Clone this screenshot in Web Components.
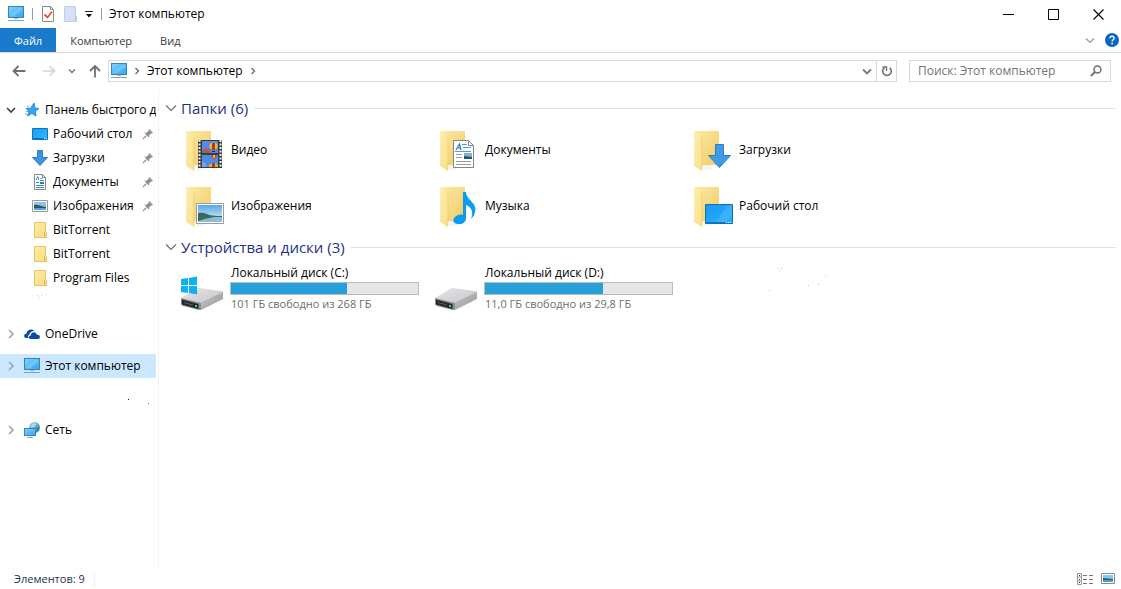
<!DOCTYPE html>
<html lang="ru">
<head>
<meta charset="utf-8">
<title>Этот компьютер</title>
<style>
  html, body { margin: 0; height: 100%; background: #fff; }
  body { font: 12px/16px "Open Sans", "Noto Sans", sans-serif; color: #000; }
</style>
</head>
<body>
<explorer-window>
  <title-bar slot="top">Этот компьютер</title-bar>
  <ribbon-tabs slot="top"></ribbon-tabs>
  <address-bar slot="top" location="Этот компьютер"></address-bar>

  <nav-tree slot="side">
    <nav-item icon="star" arrow="open">Панель быстрого до</nav-item>
    <nav-item icon="desktop" child pinned>Рабочий стол</nav-item>
    <nav-item icon="download" child pinned>Загрузки</nav-item>
    <nav-item icon="document" child pinned>Документы</nav-item>
    <nav-item icon="picture" child pinned>Изображения</nav-item>
    <nav-item icon="folder" child>BitTorrent</nav-item>
    <nav-item icon="folder" child>BitTorrent</nav-item>
    <nav-item icon="folder" child>Program Files</nav-item>
    <nav-gap icon="crumbs"></nav-gap>
    <nav-item icon="cloud" arrow="closed">OneDrive</nav-item>
    <nav-gap short></nav-gap>
    <nav-item icon="pc" arrow="closed" selected>Этот компьютер</nav-item>
    <nav-gap icon="specks"></nav-gap>
    <nav-gap short></nav-gap>
    <nav-item icon="network" arrow="closed">Сеть</nav-item>
  </nav-tree>

  <item-group label="Папки (6)">
    <folder-tile icon="f-video">Видео</folder-tile>
    <folder-tile icon="f-doc">Документы</folder-tile>
    <folder-tile icon="f-down">Загрузки</folder-tile>
    <folder-tile icon="f-pic">Изображения</folder-tile>
    <folder-tile icon="f-music">Музыка</folder-tile>
    <folder-tile icon="f-desk">Рабочий стол</folder-tile>
  </item-group>
  <item-group label="Устройства и диски (3)">
    <drive-tile icon="drive-win" used="62" note="101 ГБ свободно из 268 ГБ">Локальный диск (C:)</drive-tile>
    <drive-tile icon="drive" used="63" note="11,0 ГБ свободно из 29,8 ГБ">Локальный диск (D:)</drive-tile>
    <ui-icon name="dust"></ui-icon>
  </item-group>

  <status-bar slot="bottom">Элементов: 9</status-bar>
</explorer-window>

<script>
const svg = (w, h, body) => `<svg width="${w}" height="${h}" viewBox="0 0 ${w} ${h}" fill="none" aria-hidden="true">${body}</svg>`;
const grad = (id, a, b, dir = 'x2="1" y2="1"') => `<linearGradient id="${id}" ${dir}><stop stop-color="${a}"/><stop offset="1" stop-color="${b}"/></linearGradient>`;

const bigFolder = `<defs>${grad('fb', '#fdeaa6', '#f2cb63')}${grad('ff', '#fdeeb4', '#fadf86')}</defs>
  <path d="M7 5h24v34H14z" fill="url(#fb)"/><path d="M6 5l8 6v34l-8-5z" fill="url(#ff)"/><path d="M14 11v34" stroke="#e9c768" stroke-width=".6"/>
  <path d="M15 39h8v5h-7z" fill="#f4f4f4"/>`;
const driveBody = `<defs>${grad('dt', '#e4e4e6', '#c6c7ca')}${grad('ds', '#c8c8ca', '#96979a')}</defs>
  <path d="M1 35l15-9q1-1 3-1l22 3q3 0 2 2L21 41z" fill="url(#dt)"/>
  <path d="M20 40l23-11v7L21 47h-1z" fill="url(#ds)"/>
  <path d="M1 35l20 5v6q0 1-2 1L3 43q-2-1-2-2z" fill="#8a8c8f"/>
  <path d="M2 36.500l16.500 4.500v5L2 41.500z" fill="#252729"/><path d="M4 39.500l9 2.500" stroke="#5b5f61"/><path d="M15 42h2v2h-2z" fill="#3fd25c"/>`;
const monitor = (x, y, w, h) => `<rect x="${x + .5}" y="${y + .5}" width="${w - 1}" height="${h - 1}" fill="url(#mo)" stroke="#3c83b4"/>`;
const moGrad = `<defs>${grad('mo', '#7fd3ff', '#2fa6f2')}</defs>`;

const ICONS = {
  pc: svg(16, 16, moGrad + monitor(0, 0, 16, 12) + '<path d="M0 14.500h16" stroke="#8aa0ae"/><path d="M6 12h4v1H6z" fill="#9bb8cc"/><path d="M2 10l9-8h3v2l-8 6z" fill="#fff" opacity=".16"/>'),
  check: svg(14, 16, '<path d="M1.500 .5h8l3 3v12h-11z" fill="#fff" stroke="#8a8a8a"/><path d="M9.500 .5v3h3" stroke="#8a8a8a"/><path d="M3.500 8.500l3 3 4.500-6" stroke="#e0542c" stroke-width="1.800"/>'),
  ghost: svg(14, 16, '<path d="M1.500.5h11v9l1 1v5h-12z" fill="#d5e2f5" stroke="#c3d0e2"/><path d="M12.500 9v6" stroke="#b9c6da"/>'),
  more: svg(8, 8, '<path d="M0 1.500h8" stroke="#222"/><path d="M1 4h6L4 7.500z" fill="#111"/>'),
  min: svg(11, 11, '<path d="M0 5.500h11" stroke="#000"/>'),
  max: svg(11, 11, '<path d="M.5.5h10v10H.5z" stroke="#000"/>'),
  close: svg(11, 11, '<path d="M.5.5l10 10M10.500.5l-10 10" stroke="#000" stroke-width="1.100"/>'),
  help: svg(14, 14, '<circle cx="7" cy="7" r="7" fill="#0a66c4"/><path d="M4.900 5.300c.1-2.900 4.400-2.700 4.200-.1-.1 1.500-1.900 1.500-2 3.300" stroke="#fff" stroke-width="1.400"/><circle cx="7.100" cy="10.500" r=".9" fill="#fff"/>'),
  back: svg(14, 12, '<path d="M13.500 6H2M6.500 1L1.500 6l5 5" stroke="#707070" stroke-width="1.800"/>'),
  fwd: svg(14, 12, '<path d="M.5 6H12M7.500 1l5 5-5 5" stroke="#d4d4d4" stroke-width="1.600"/>'),
  up: svg(12, 14, '<path d="M6 13.500V2M1 7l5-5 5 5" stroke="#707070" stroke-width="1.800"/>'),
  tiny: svg(8, 6, '<path d="M1 1.500l3 3 3-3" stroke="#777" stroke-width="1.400"/>'),
  drop: svg(10, 7, '<path d="M1 1.500l4 4 4-4" stroke="#777" stroke-width="1.900"/>'),
  thin: svg(10, 7, '<path d="M1 1.500l4 4 4-4" stroke="#999" stroke-width="1.200"/>'),
  group: svg(12, 8, '<path d="M1 1.500l5 5 5-5" stroke="#6f6f6f" stroke-width="1.200"/>'),
  open: svg(10, 8, '<path d="M1 2l4 4 4-4" stroke="#444" stroke-width="1.700"/>'),
  closed: svg(10, 10, '<path d="M3 1l4 4-4 4" stroke="#a3a3a3" stroke-width="1.600"/>'),
  crumb: svg(6, 8, '<path d="M1.500 1l3 3-3 3" stroke="#777" stroke-width="1.500"/>'),
  refresh: svg(12, 12, '<path d="M3.300 2.800a4.300 4.300 0 1 0 5.400 0" stroke="#707070" stroke-width="1.600"/><path d="M1.500 2h4v4" stroke="#707070" stroke-width="1.400"/>'),
  search: svg(12, 12, '<circle cx="7.500" cy="4.500" r="3.500" stroke="#707070" stroke-width="1.500"/><path d="M5 7L.8 11.200" stroke="#707070" stroke-width="1.900"/>'),
  star: svg(16, 16, '<path d="M10 1l1 5 4 .5-3.500 3L12 14l-4-2.500L3.500 14 5 9.500 2 6.500l4.500-.3z" fill="#35a4ee" stroke="#1d82cf" stroke-width=".8"/><path d="M2 9.500h3M1 12h2.500M3 4.500l2 .5" stroke="#4fb0ef"/>'),
  desktop: svg(16, 16, `<defs>${grad('dk', '#16a0f8', '#36b4ff')}</defs><path d="M.5 2.500h15v11H.5z" fill="url(#dk)" stroke="#1272b8"/><path d="M1 12.500h11" stroke="#0a71c4"/><path d="M12 12.500h3" stroke="#c5e8ff" stroke-dasharray="1 1"/>`),
  download: svg(16, 16, '<path d="M5.500.5h5v7h5L8 15.500.5 7.500h5z" fill="#3d94e0" stroke="#2a79c1"/>'),
  document: svg(16, 16, '<path d="M2.500.5h8l3 3v12h-11z" fill="#fff" stroke="#888"/><path d="M10.500.5v3h3" stroke="#888"/><path d="M4 6l1.800-3.500L7 6M4 8.500h3M4 11.500h8M4 13.500h8M8 6.500h4M8.500 4.500h2" stroke="#3a8fc9"/><path d="M8 8h4v2H8z" fill="#397f9c"/>'),
  picture: svg(16, 16, '<path d="M.5 2.500h15v11H.5z" fill="#fff" stroke="#9a9a9a"/><path d="M2 4h12v8H2z" fill="#8cc4f2"/><path d="M2 7c4-1 7 2 12 2v1H2z" fill="#27595c"/><path d="M2 10h12v2H2z" fill="#5d9fd4"/>'),
  folder: svg(16, 16, `<defs>${grad('fo', '#ffeeab', '#fadb7b')}</defs><path d="M2.500.5h11v9l1 1v5h-12z" fill="url(#fo)" stroke="#e8c469"/><path d="M12.500 15v-4.500l1-1" stroke="#dfb651"/>`),
  cloud: svg(16, 16, '<path d="M1.500 12C-.8 10.500.2 7.500 2.500 7.500 3 3.500 8 2 10.500 5 7 5 5.500 7 5.500 8.500 3.500 9.500 4 12 4.500 12z" fill="#0c4da2"/><path d="M6.500 13c-2.500-.3-2-3.500.3-3.500C7 6 11.500 5 12.800 8.500c3.700-.2 4.200 4.200 1.200 4.500z" fill="#0c4da2"/>'),
  network: svg(16, 16, `<defs>${grad('gl', '#a4d8ee', '#2c7fae')}</defs><circle cx="10.500" cy="5.500" r="5.500" fill="url(#gl)"/><path d="M8 2l3-1 1 2-2 2-3 0z" fill="#d6eecb" opacity=".7"/><path d="M13 5h2v3l-2 1z" fill="#2b7f77" opacity=".8"/>` + moGrad + monitor(0, 6, 12, 8) + '<path d="M3 15.500h6" stroke="#7fa8c3"/>'),
  pin: svg(12, 12, '<path d="M7 .8L11.200 5l-2 .5-2 2 0 2.300L2.200 4.800l2.300 0 2-2z" fill="#8b949b"/><path d="M4.600 7.400L1 11" stroke="#8b949b" stroke-width="1.300"/>'),
  crumbs: svg(16, 8, '<path d="M3 5h1v1H3zM8 5h1v1H8zM12 4h1v1h-1zM5 7h1v1H5z" fill="#ecd48c"/>'),
  specks: svg(24, 8, '<path d="M0 3h1v1H0z" fill="#222"/><path d="M20 7h1v1h-1z" fill="#777"/>'),
  dust: svg(120, 48, '<path d="M89 7h1v1h-1zM91 9h1v1h-1zM120 24h1v1h-1zM81 29h1v1h-1zM137 15h1v1h-1z" fill="#ccc"/><path d="M93 7h1v1h-1zM130 23h1v1h-1z" fill="#bbb"/>'),
  details: svg(16, 12, '<path d="M.5.5h4v11h-4zM.5 4h4M.5 8h4" stroke="#999"/><path d="M2 2h1v1H2zM2 6h1v1H2zM2 9h1v1H2z" fill="#333"/><path d="M6 2.500h4M12 2.500h4M6 6.500h4M12 6.500h4M6 10.500h4M12 10.500h4" stroke="#777"/>'),
  thumbs: svg(14, 12, '<path d="M.5.5h13v10H.5z" fill="#fff" stroke="#8b8b8b"/><path d="M2 2h10v7H2z" fill="#8cc4f2"/><path d="M2 5c4 0 6 1 10 1v1H2z" fill="#285e72"/><path d="M2 7h10v2H2z" fill="#569bd0"/>'),
  'f-video': svg(48, 48, bigFolder + `<path d="M18 14h24v28H18z" fill="#3c3c3c"/><path d="M19.500 14v28M40.500 14v28" stroke="#eee" stroke-width="2" stroke-dasharray="2 1.500"/>
    <path d="M22 15h16v12H22zM22 29h16v12H22z" fill="#4d8de8"/><path d="M22 24l5-2 4 3v2h-9z" fill="#cf4c5f"/><path d="M22 27v-2l3 1 4-1v2z" fill="#4d8c36"/>
    <ellipse cx="33.500" cy="20" rx="4" ry="3.500" fill="#f1bb24"/><path d="M32 17h3v7h-3z" fill="#c22f25"/><path d="M32 25h3v1h-3z" fill="#222"/>
    <path d="M31 29h6l-2 4h-2z" fill="#d0372f"/><path d="M33 29h2v3h-2z" fill="#f1bb24"/><path d="M29 41q0-4 4.500-4t4.500 4z" fill="#e7b62c"/><path d="M32 37h3v4h-3z" fill="#c22f25"/><path d="M22 35l4 3v3h-4z" fill="#6faaf0"/>`),
  'f-doc': svg(48, 48, bigFolder + `<path d="M19.500 14.500h15l5 5v22h-20z" fill="#fff" stroke="#858585"/><path d="M34.500 14.500v5h5" stroke="#858585"/>
    <path d="M22 24l3.500-6 1.500 6M23.500 22h3" stroke="#2481bd" stroke-width="1.200"/><path d="M28 18.500h5M29 21.500h8M21 25.500h16" stroke="#4ba2d5"/><path d="M22 28.500h6M22 31.500h6M22 35.500h15M22 38.500h15" stroke="#999"/><path d="M30 27h8v6h-8z" fill="#77b5dc"/><path d="M30 30l8 1v2h-8z" fill="#275463"/>`),
  'f-down': svg(48, 48, bigFolder + '<path d="M27.500 18.500h8v11h7L31.500 41.500 20.500 29.500h7z" fill="#419ae4" stroke="#2d7bc4"/>'),
  'f-pic': svg(48, 48, bigFolder + `<defs>${grad('sk', '#5aa7e8', '#e2f3fc', 'x2="0" y2="1"')}</defs><path d="M16.500 21.500h27v20h-27z" fill="#fff" stroke="#9b9b9b"/><path d="M18 23h24v17H18z" fill="url(#sk)"/>
    <path d="M18 31q5-1 9 1t15 2v1H18z" fill="#386b58"/><path d="M18 35h24v5H18z" fill="#8bbcda"/><path d="M18 35h16l-9 2-7 2z" fill="#3b6b68"/>`),
  'f-music': svg(48, 48, bigFolder + '<path d="M29 10h3c0 8 12 11 9 20-.5 3-2 5-4 7 3-8 0-12-5-14v13c0 4-4 7-8 6-5 0-6-4-3-7 2-2 5-3 8-2z" fill="#0a9bf2"/>'),
  'f-desk': svg(48, 48, bigFolder + `<defs>${grad('de', '#1599f2', '#2db1ff')}</defs><path d="M17.500 22.500h27v19h-27z" fill="url(#de)" stroke="#176fa9"/><path d="M28 40l12-17h4v9l-6 8z" fill="#fff" opacity=".1"/><path d="M18 40.500h20" stroke="#0a78cd"/><path d="M38 40.500h6" stroke="#d9f1ff" stroke-dasharray="1 1"/>`),
  drive: svg(48, 48, driveBody),
  'drive-win': svg(48, 48, driveBody + '<path d="M1 16l7-1v7H1zM9 15l8-1.500V22H9zM1 23h7v7l-7-1zM9 23h8v8.500L9 30z" fill="#0cb2f0"/>'),
};

const define = (name, css, html) => customElements.define(name, class extends HTMLElement {
  constructor() {
    super();
    this.attachShadow({ mode: 'open' });
  }
  connectedCallback() {
    const tpl = document.createElement('template');
    tpl.innerHTML = `<style>*{box-sizing:border-box}button{font:inherit;color:inherit;background:none;border:0;padding:0;margin:0}${css}</style>` +
      (typeof html === 'function' ? html(this) : html);
    this.shadowRoot.replaceChildren(tpl.content.cloneNode(true));
  }
});
const icon = n => `<ui-icon name="${n}"></ui-icon>`;

define('ui-icon', ':host{display:inline-flex;flex:none}svg{display:block;overflow:visible}', el => ICONS[el.getAttribute('name')] || '');

define('title-bar', `
  :host{display:flex;align-items:center;height:28px;padding-left:8px}
  i{width:1px;height:12px;background:#9a9a9a}
  button{display:flex;align-items:center;justify-content:center}
  .quick{display:flex;align-items:center;gap:8px}
  .name{flex:1;padding-left:7px}
  .win button{width:45px;height:26px}
  .win{display:flex}`,
  `<div class="quick">${icon('pc')}<i></i><button aria-label="Свойства">${icon('check')}</button><button aria-label="Новая папка">${icon('ghost')}</button><button aria-label="Настройка панели">${icon('more')}</button><i></i></div>
   <span class="name"><slot></slot></span>
   <div class="win"><button aria-label="Свернуть">${icon('min')}</button><button aria-label="Развернуть">${icon('max')}</button><button aria-label="Закрыть">${icon('close')}</button></div>`);

define('ribbon-tabs', `
  :host{display:flex;align-items:center;height:24px;border-bottom:1px solid #dadbdc;color:#3c3c3c;font-size:11px}
  button{height:24px;padding:2px 14px 0}
  .file{background:#1979ca;color:#fff}
  .end{margin-left:auto;display:flex;align-items:center;gap:10px;padding-right:2px}
  .end button{padding:0;display:flex;align-items:center}`,
  `<button class="file">Файл</button><button>Компьютер</button><button>Вид</button>
   <div class="end"><button aria-label="Развернуть ленту">${icon('thin')}</button><button aria-label="Справка">${icon('help')}</button></div>`);

define('address-bar', `
  :host{display:flex;align-items:center;height:36px;padding:0 10px 0 12px}
  button{display:flex;align-items:center;justify-content:center}
  .arrows{display:flex;align-items:center;width:96px}
  .arrows button+button{margin-left:16px}
  .arrows button:nth-child(3){margin-left:12px}
  .arrows button:nth-child(4){margin-left:13px}
  .path{flex:1;display:flex;align-items:center;height:22px;border:1px solid #d9d9d9;padding-left:2px;gap:7px}
  .path .end{margin-left:auto}
  .reload{width:20px;height:20px;border-left:1px solid #d9d9d9;margin-left:-3px}
  .find{display:flex;align-items:center;width:202px;height:22px;margin-left:12px;border:1px solid #d9d9d9;padding:0 8px}
  input{flex:1;min-width:0;border:0;padding:0;font:inherit;outline:0;background:none}
  input::placeholder{color:#757575;opacity:1}`,
  el => `<div class="arrows"><button aria-label="Назад">${icon('back')}</button><button aria-label="Вперед">${icon('fwd')}</button><button aria-label="Последние">${icon('tiny')}</button><button aria-label="Вверх">${icon('up')}</button></div>
   <div class="path">${icon('pc')}${icon('crumb')}<button>${el.getAttribute('location')}</button>${icon('crumb')}<button class="end" aria-label="История">${icon('drop')}</button><button class="reload" aria-label="Обновить">${icon('refresh')}</button></div>
   <div class="find"><input type="search" aria-label="Поиск" placeholder="Поиск: ${el.getAttribute('location')}"><button aria-label="Найти">${icon('search')}</button></div>`);

define('nav-tree', ':host{display:flex;flex-direction:column;padding:9px 2px 0 0}', '<slot></slot>');

define('nav-gap', ':host{display:flex;align-items:flex-start;height:32px}:host([short]){height:8px}:host([icon=crumbs]){padding-left:34px}:host([icon=specks]){padding:18px 0 0 128px;box-sizing:border-box}',
  el => el.hasAttribute('icon') ? icon(el.getAttribute('icon')) : '');

define('nav-item', `
  :host{display:block}
  a{display:flex;align-items:center;height:24px;padding-left:6px;color:inherit;text-decoration:none}
  .arrow{width:18px;display:flex}
  :host([child]) a{padding-left:32px}
  :host([selected]) a{background:#cce8ff}
  span{flex:1;min-width:0;padding-left:5px;white-space:nowrap;overflow:hidden}
  .pin{margin-right:2px}`,
  el => `<a href="#">${el.hasAttribute('child') ? '' : `<div class="arrow">${icon(el.getAttribute('arrow'))}</div>`}${icon(el.getAttribute('icon'))}<span><slot></slot></span>${el.hasAttribute('pinned') ? '<ui-icon class="pin" name="pin"></ui-icon>' : ''}</a>`);

define('item-group', `
  :host{display:block}
  header{display:flex;align-items:center;height:27px;padding-bottom:1px}
  button{display:flex;width:16px}
  h2{margin:0;padding-bottom:1px;font-size:15px;line-height:24px;font-weight:400;color:#1e3287}
  hr{flex:1;height:1px;border:0;margin:0 0 0 6px;background:#e2e2e2}
  .grid{display:grid;grid-template-columns:repeat(auto-fill,254px);grid-auto-rows:56px;padding-left:15px}`,
  el => `<header><button aria-label="Свернуть группу">${icon('group')}</button><h2>${el.getAttribute('label')}</h2><hr></header><div class="grid"><slot></slot></div>`);

define('folder-tile', ':host{display:flex;align-items:center;gap:3px}', el => `${icon(el.getAttribute('icon'))}<span><slot></slot></span>`);

define('drive-tile', `
  :host{display:flex;gap:2px;padding-top:2px}
  label{display:block;padding-left:1px}
  .info{padding-top:2px}
  progress{display:block;appearance:none;-webkit-appearance:none;width:189px;height:13px;margin:1px 0;border:1px solid #bcbcbc;background:#e6e6e6}
  progress::-webkit-progress-bar{background:#e6e6e6}
  progress::-webkit-progress-value{background:#26a0da}
  small{display:block;font-size:11px;padding-left:1px;color:#6d6d6d}`,
  el => `${icon(el.getAttribute('icon'))}<div class="info"><label for="p"><slot></slot></label><progress id="p" max="100" value="${el.getAttribute('used')}"></progress><small>${el.getAttribute('note')}</small></div>`);

define('status-bar', `
  :host{display:flex;align-items:center;height:21px;padding:0 6px 0 14px;color:#26364d;font-size:11px}
  span{padding-right:9px;border-right:1px solid #f2f2f2}
  .modes{margin-left:auto;display:flex;gap:8px}
  button{display:flex}`,
  `<span><slot></slot></span><div class="modes"><button aria-label="Таблица">${icon('details')}</button><button aria-label="Крупные значки">${icon('thumbs')}</button></div>`);

define('explorer-window', `
  :host{display:flex;flex-direction:column;min-height:100vh}
  .body{flex:1;display:flex}
  aside{width:159px;flex:none;border-right:1px solid #f3f3f3}
  main{flex:1;min-width:0;padding:6px 5px 0 6px}
  @media (max-width:600px){main{padding-right:0}}`,
  '<slot name="top"></slot><div class="body"><aside><slot name="side"></slot></aside><main><slot></slot></main></div><slot name="bottom"></slot>');
</script>
</body>
</html>
